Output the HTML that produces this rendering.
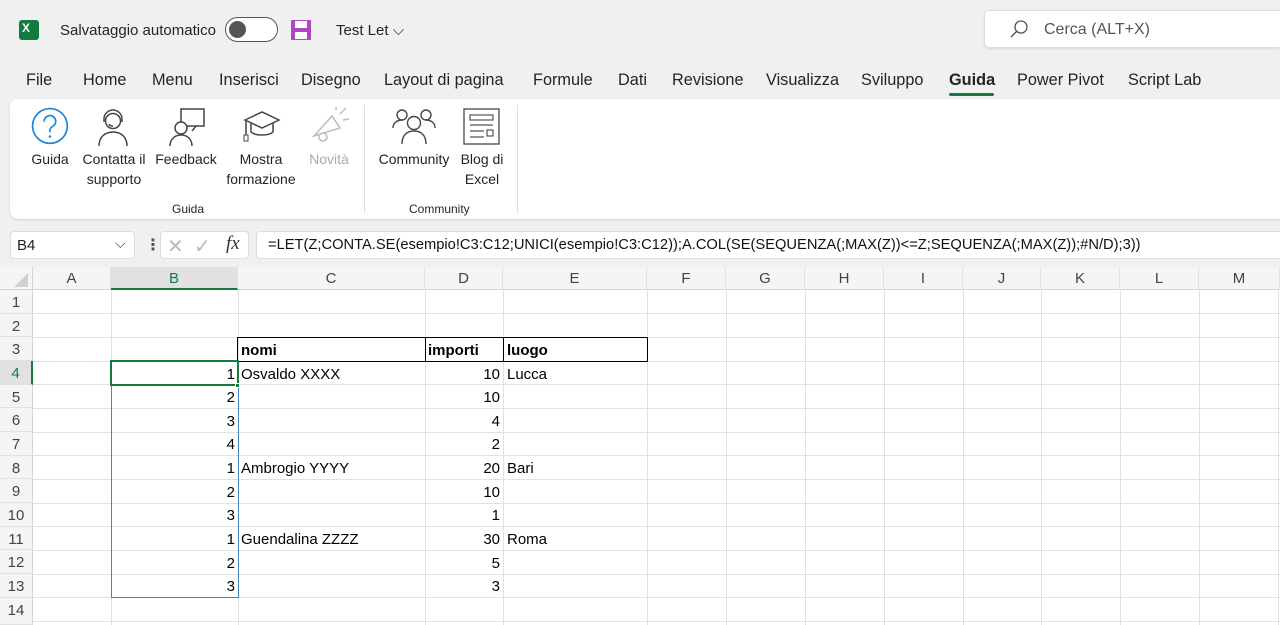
<!DOCTYPE html>
<html><head><meta charset="utf-8"><style>
*{margin:0;padding:0;box-sizing:border-box}
body{width:1280px;height:625px;overflow:hidden;background:#f0f0f0;font-family:"Liberation Sans","DejaVu Sans",sans-serif;color:#242424;position:relative}
.a{position:absolute;white-space:nowrap}
.tab{position:absolute;top:71px;font-size:16.3px}
.rib{position:absolute;left:10px;top:99px;width:1270px;height:120px;background:#fff;border-radius:8px 0 0 8px;box-shadow:0 1px 2px rgba(0,0,0,.15)}
.lbl{position:absolute;font-size:14px;text-align:center;line-height:20px}
.grp{position:absolute;font-size:12px;top:202px}
.sheet{position:absolute;left:0;top:267px;width:1280px;height:358px;background:#fff}
.v{position:absolute;width:1px;background:#e1e1e1;top:290px;height:335px}
.h{position:absolute;height:1px;background:#e1e1e1;left:33px;width:1247px}
.ch{position:absolute;top:267px;height:23px;font-size:15px;color:#444;text-align:center;line-height:24px;background:#f5f5f5;border-right:1px solid #e1e1e1;border-bottom:1px solid #d4d4d4}
.rh{position:absolute;left:0;width:33px;font-size:15px;color:#444;text-align:center;background:#f5f5f5;border-right:1px solid #d4d4d4;border-bottom:1px solid #e1e1e1}
.c{position:absolute;font-size:15px;color:#000;line-height:26px}
.r{text-align:right}
</style></head><body>
<!-- title bar -->
<div class="a" style="left:19px;top:20px;width:20px;height:20px;background:#107c41;border-radius:3px"></div>
<div class="a" style="left:22px;top:21px;font-size:12px;color:#fff;font-weight:bold">X</div>
<div class="a" style="left:60px;top:22px;font-size:15px">Salvataggio automatico</div>
<div class="a" style="left:225px;top:17px;width:53px;height:25px;border:1.5px solid #555;border-radius:13px;background:#fff"></div>
<div class="a" style="left:229px;top:21px;width:17px;height:17px;border-radius:50%;background:#555"></div>
<svg class="a" style="left:290px;top:19px" width="22" height="22" viewBox="0 0 22 22"><rect x="1" y="1" width="20" height="20" fill="#b146c2"/><rect x="5" y="2" width="12" height="7" fill="#fff"/><rect x="5" y="13" width="12" height="7" fill="#fff"/></svg>
<div class="a" style="left:336px;top:22px;font-size:15px">Test Let ⌵</div>
<div class="a" style="left:984px;top:10px;width:300px;height:38px;background:#fff;border:1px solid #ddd;border-radius:5px;box-shadow:0 1px 2px rgba(0,0,0,.1)"></div>
<svg class="a" style="left:1009px;top:19px" width="20" height="20" viewBox="0 0 20 20"><circle cx="12" cy="8" r="6" fill="none" stroke="#555" stroke-width="1.3"/><line x1="7.5" y1="12.5" x2="2" y2="18" stroke="#555" stroke-width="1.5"/></svg>
<div class="a" style="left:1044px;top:21px;font-size:16px;color:#555">Cerca (ALT+X)</div>
<!-- tabs -->
<div class="tab" style="left:26px">File</div>
<div class="tab" style="left:83px">Home</div>
<div class="tab" style="left:152px">Menu</div>
<div class="tab" style="left:219px">Inserisci</div>
<div class="tab" style="left:301px">Disegno</div>
<div class="tab" style="left:384px">Layout di pagina</div>
<div class="tab" style="left:533px">Formule</div>
<div class="tab" style="left:618px">Dati</div>
<div class="tab" style="left:672px">Revisione</div>
<div class="tab" style="left:766px">Visualizza</div>
<div class="tab" style="left:861px">Sviluppo</div>
<div class="tab" style="left:949px;font-weight:bold">Guida</div>
<div class="a" style="left:949px;top:93px;width:45px;height:3px;background:#107c41;border-radius:2px"></div>
<div class="tab" style="left:1017px">Power Pivot</div>
<div class="tab" style="left:1128px">Script Lab</div>
<!-- ribbon -->
<div class="rib"></div>
<svg class="a" style="left:31px;top:107px" width="40" height="40" viewBox="0 0 38 38"><circle cx="18" cy="18" r="16.5" fill="none" stroke="#1a86d9" stroke-width="1.6"/><path d="M12.5 14a5.5 5.5 0 1 1 8 4.5c-2 1-2.5 2-2.5 4v1.5" fill="none" stroke="#1a86d9" stroke-width="1.6"/><circle cx="18" cy="28" r="1.2" fill="#1a86d9"/></svg>
<svg class="a" style="left:96px;top:108px" width="36" height="38" viewBox="0 0 36 38"><circle cx="17" cy="13" r="7.5" fill="none" stroke="#444" stroke-width="1.5"/><path d="M8 14v-3a9 9 0 0 1 18 0v3" fill="none" stroke="#444" stroke-width="1.5"/><path d="M13 16a4 4 0 0 0 4 2" stroke="#444" fill="none" stroke-width="1.5"/><path d="M3 38c0-9 6-14 14-14s14 5 14 14" fill="none" stroke="#444" stroke-width="1.5"/></svg>
<svg class="a" style="left:168px;top:108px" width="38" height="38" viewBox="0 0 38 38"><rect x="13" y="1" width="23" height="17" fill="none" stroke="#444" stroke-width="1.5"/><path d="M28 18l-4 5" stroke="#444" stroke-width="1.5"/><circle cx="13" cy="20" r="6" fill="#fff" stroke="#444" stroke-width="1.5"/><path d="M2 38c0-7 5-11 11-11s11 4 11 11" fill="#fff" stroke="#444" stroke-width="1.5"/></svg>
<svg class="a" style="left:243px;top:110px" width="38" height="34" viewBox="0 0 38 34"><path d="M2 10l17-8 17 8-17 8z" fill="none" stroke="#444" stroke-width="1.5"/><path d="M8 13v9c4 4 18 4 22 0v-9" fill="none" stroke="#444" stroke-width="1.5"/><path d="M3 11v14" stroke="#444" stroke-width="1.5"/><rect x="1" y="25" width="4" height="6" fill="none" stroke="#444"/></svg>
<svg class="a" style="left:310px;top:106px" width="40" height="38" viewBox="0 0 40 38"><path d="M4 30l18-20 8 12z" fill="none" stroke="#bbb" stroke-width="1.5"/><circle cx="13" cy="31" r="4" fill="none" stroke="#bbb" stroke-width="1.5"/><path d="M30 8l6-6M33 14l6-1M26 4l0-3" stroke="#bbb" stroke-width="1.5"/></svg>
<div class="lbl" style="left:28px;top:149px;width:44px">Guida</div>
<div class="lbl" style="left:78px;top:149px;width:72px">Contatta il<br>supporto</div>
<div class="lbl" style="left:152px;top:149px;width:68px">Feedback</div>
<div class="lbl" style="left:222px;top:149px;width:78px">Mostra<br>formazione</div>
<div class="lbl" style="left:304px;top:149px;width:50px;color:#aaa">Novità</div>
<div class="grp" style="left:172px">Guida</div>
<div class="a" style="left:364px;top:105px;width:1px;height:108px;background:#ddd"></div>
<svg class="a" style="left:392px;top:108px" width="44" height="36" viewBox="0 0 44 36"><circle cx="10" cy="7" r="5" fill="none" stroke="#444" stroke-width="1.4"/><circle cx="34" cy="7" r="5" fill="none" stroke="#444" stroke-width="1.4"/><path d="M1 20c0-5 4-8 9-8M43 20c0-5-4-8-9-8" fill="none" stroke="#444" stroke-width="1.4"/><circle cx="22" cy="15" r="6.5" fill="none" stroke="#444" stroke-width="1.4"/><path d="M10 36c0-9 5-13 12-13s12 4 12 13" fill="none" stroke="#444" stroke-width="1.4"/></svg>
<svg class="a" style="left:463px;top:108px" width="38" height="38" viewBox="0 0 38 38"><rect x="1" y="1" width="35" height="35" fill="none" stroke="#555" stroke-width="1.4"/><rect x="7" y="7" width="23" height="5" fill="none" stroke="#555" stroke-width="1.2"/><path d="M7 17h23M7 23h14M7 29h14" stroke="#555" stroke-width="1.2"/><rect x="24" y="22" width="6" height="6" fill="none" stroke="#555" stroke-width="1.2"/></svg>
<div class="lbl" style="left:374px;top:149px;width:80px">Community</div>
<div class="lbl" style="left:456px;top:149px;width:52px">Blog di<br>Excel</div>
<div class="grp" style="left:409px">Community</div>
<div class="a" style="left:517px;top:105px;width:1px;height:108px;background:#ddd"></div>
<!-- formula bar -->
<div class="a" style="left:10px;top:231px;width:125px;height:28px;background:#fff;border:1px solid #ddd;border-radius:4px"></div>
<div class="a" style="left:17px;top:237px;font-size:15px">B4</div>
<div class="a" style="left:115px;top:235px;font-size:14px;color:#444">⌵</div>
<div class="a" style="left:145px;top:235px;font-size:16px;color:#555;font-weight:bold">⋮</div>
<div class="a" style="left:160px;top:231px;width:89px;height:28px;background:#fff;border:1px solid #ddd;border-radius:4px"></div>
<div class="a" style="left:167px;top:234px;font-size:20px;color:#bbb">✕</div>
<div class="a" style="left:194px;top:234px;font-size:20px;color:#bbb">✓</div>
<div class="a" style="left:226px;top:233px;font-size:19px;font-style:italic;font-family:'Liberation Serif',serif;color:#333">fx</div>
<div class="a" style="left:256px;top:231px;width:1030px;height:28px;background:#fff;border:1px solid #ddd;border-radius:4px"></div>
<div class="a" style="left:268px;top:237px;font-size:14.7px;color:#111">=LET(Z;CONTA.SE(esempio!C3:C12;UNICI(esempio!C3:C12));A.COL(SE(SEQUENZA(;MAX(Z))&lt;=Z;SEQUENZA(;MAX(Z));#N/D);3))</div>
<!-- sheet -->
<div class="sheet"></div>
<div class="a" style="left:0;top:267px;width:33px;height:23px;background:#f5f5f5;border-right:1px solid #d4d4d4;border-bottom:1px solid #d4d4d4"></div>
<div class="a" style="left:14px;top:273px;width:0;height:0;border-left:14px solid transparent;border-bottom:14px solid #d0d0d0"></div>
<div class="ch" style="left:33px;width:78px">A</div>
<div class="ch" style="left:111px;width:127px;background:#e1e1e1;color:#107c41;border-bottom:2px solid #107c41">B</div>
<div class="ch" style="left:238px;width:187px">C</div>
<div class="ch" style="left:425px;width:78px">D</div>
<div class="ch" style="left:503px;width:144px">E</div>
<div class="ch" style="left:647px;width:79px">F</div>
<div class="ch" style="left:726px;width:79px">G</div>
<div class="ch" style="left:805px;width:79px">H</div>
<div class="ch" style="left:884px;width:79px">I</div>
<div class="ch" style="left:963px;width:78px">J</div>
<div class="ch" style="left:1041px;width:79px">K</div>
<div class="ch" style="left:1120px;width:79px">L</div>
<div class="ch" style="left:1199px;width:81px">M</div>
<!-- verticals -->
<div class="v" style="left:111px"></div><div class="v" style="left:238px"></div><div class="v" style="left:425px"></div><div class="v" style="left:503px"></div><div class="v" style="left:647px"></div><div class="v" style="left:726px"></div><div class="v" style="left:805px"></div><div class="v" style="left:884px"></div><div class="v" style="left:963px"></div><div class="v" style="left:1041px"></div><div class="v" style="left:1120px"></div><div class="v" style="left:1199px"></div><div class="v" style="left:1278px"></div>
<!-- horizontals -->
<div class="h" style="top:313px"></div><div class="h" style="top:337px"></div><div class="h" style="top:361px"></div><div class="h" style="top:384px"></div><div class="h" style="top:408px"></div><div class="h" style="top:432px"></div><div class="h" style="top:455px"></div><div class="h" style="top:479px"></div><div class="h" style="top:503px"></div><div class="h" style="top:526px"></div><div class="h" style="top:550px"></div><div class="h" style="top:574px"></div><div class="h" style="top:597px"></div><div class="h" style="top:621px"></div>
<!-- row headers -->
<div class="rh" style="top:290px;height:24px;line-height:26px">1</div>
<div class="rh" style="top:314px;height:23px;line-height:26px">2</div>
<div class="rh" style="top:337px;height:24px;line-height:26px">3</div>
<div class="rh" style="top:361px;height:24px;line-height:26px;background:#e1e1e1;color:#107c41;border-right:2px solid #107c41">4</div>
<div class="rh" style="top:385px;height:23px;line-height:26px">5</div>
<div class="rh" style="top:408px;height:24px;line-height:26px">6</div>
<div class="rh" style="top:432px;height:24px;line-height:26px">7</div>
<div class="rh" style="top:456px;height:23px;line-height:26px">8</div>
<div class="rh" style="top:479px;height:24px;line-height:26px">9</div>
<div class="rh" style="top:503px;height:24px;line-height:26px">10</div>
<div class="rh" style="top:527px;height:23px;line-height:26px">11</div>
<div class="rh" style="top:550px;height:24px;line-height:26px">12</div>
<div class="rh" style="top:574px;height:24px;line-height:26px">13</div>
<div class="rh" style="top:598px;height:27px;line-height:26px">14</div>
<!-- table header border -->
<div class="a" style="left:237px;top:337px;width:411px;height:25px;border:1px solid #000"></div>
<div class="a" style="left:425px;top:337px;width:1px;height:25px;background:#000"></div>
<div class="a" style="left:503px;top:337px;width:1px;height:25px;background:#000"></div>
<div class="c" style="left:241px;top:338px;font-weight:bold">nomi</div>
<div class="c" style="left:428px;top:338px;font-weight:bold">importi</div>
<div class="c" style="left:507px;top:338px;font-weight:bold">luogo</div>
<!-- B values -->
<div class="c r" style="left:111px;width:124px;top:362px">1</div>
<div class="c r" style="left:111px;width:124px;top:385px">2</div>
<div class="c r" style="left:111px;width:124px;top:409px">3</div>
<div class="c r" style="left:111px;width:124px;top:432px">4</div>
<div class="c r" style="left:111px;width:124px;top:456px">1</div>
<div class="c r" style="left:111px;width:124px;top:480px">2</div>
<div class="c r" style="left:111px;width:124px;top:503px">3</div>
<div class="c r" style="left:111px;width:124px;top:527px">1</div>
<div class="c r" style="left:111px;width:124px;top:551px">2</div>
<div class="c r" style="left:111px;width:124px;top:574px">3</div>
<!-- C/D/E -->
<div class="c" style="left:241px;top:362px">Osvaldo XXXX</div>
<div class="c" style="left:241px;top:456px">Ambrogio YYYY</div>
<div class="c" style="left:241px;top:527px">Guendalina ZZZZ</div>
<div class="c r" style="left:425px;width:75px;top:362px">10</div>
<div class="c r" style="left:425px;width:75px;top:385px">10</div>
<div class="c r" style="left:425px;width:75px;top:409px">4</div>
<div class="c r" style="left:425px;width:75px;top:432px">2</div>
<div class="c r" style="left:425px;width:75px;top:456px">20</div>
<div class="c r" style="left:425px;width:75px;top:480px">10</div>
<div class="c r" style="left:425px;width:75px;top:503px">1</div>
<div class="c r" style="left:425px;width:75px;top:527px">30</div>
<div class="c r" style="left:425px;width:75px;top:551px">5</div>
<div class="c r" style="left:425px;width:75px;top:574px">3</div>
<div class="c" style="left:507px;top:362px">Lucca</div>
<div class="c" style="left:507px;top:456px">Bari</div>
<div class="c" style="left:507px;top:527px">Roma</div>
<!-- spill + selection -->
<div class="a" style="left:111px;top:361px;width:128px;height:237px;border:1.5px solid #4a7fd0"></div>
<div class="a" style="left:110px;top:360px;width:129px;height:26px;border:2px solid #107c41"></div>
<div class="a" style="left:235px;top:383px;width:5px;height:5px;background:#107c41;border:1px solid #fff"></div>
</body></html>
